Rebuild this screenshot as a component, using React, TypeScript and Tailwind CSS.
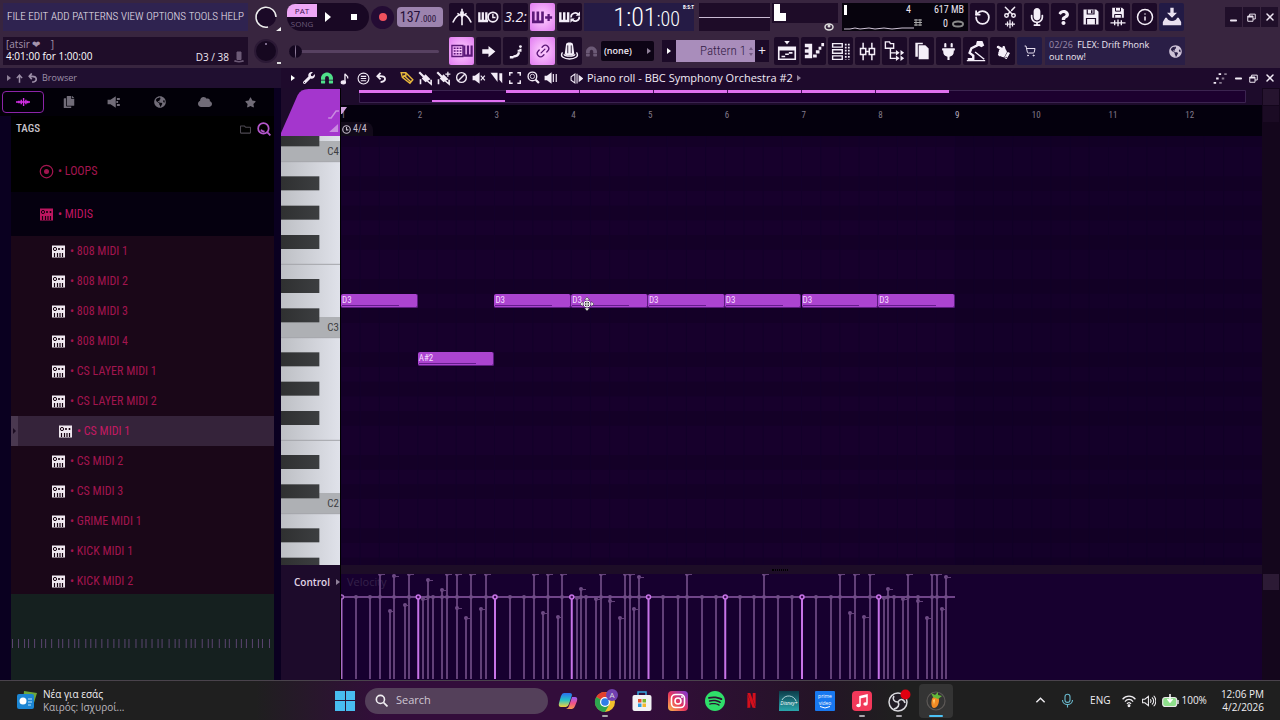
import { useState } from 'react'
import type { ReactNode } from 'react'
import { Info, Link2, Minus, RotateCcw, Scissors, ShoppingCart, X } from 'lucide-react'
import {
  FaCloud, FaCopy, FaGlobeAmericas, FaHandPointLeft, FaMagnet, FaMicrophone,
  FaPlug, FaQuestion, FaRegFolder, FaStar, FaWrench,
} from 'react-icons/fa'
import { SiNetflix, SiSpotify } from 'react-icons/si'

/* ---------- Data ---------- */

const menus = ['FILE', 'EDIT', 'ADD', 'PATTERNS', 'VIEW', 'OPTIONS', 'TOOLS', 'HELP']

const files = [
  '808 MIDI 1', '808 MIDI 2', '808 MIDI 3', '808 MIDI 4', 'CS LAYER MIDI 1', 'CS LAYER MIDI 2',
  'CS MIDI 1', 'CS MIDI 2', 'CS MIDI 3', 'GRIME MIDI 1', 'KICK MIDI 1', 'KICK MIDI 2',
]

// row 0 is C4, each row goes one semitone down
const notes = [
  { name: 'D3', bar: 0, row: 10 },
  { name: 'A#2', bar: 1, row: 14 },
  { name: 'D3', bar: 2, row: 10 },
  { name: 'D3', bar: 3, row: 10 },
  { name: 'D3', bar: 4, row: 10 },
  { name: 'D3', bar: 5, row: 10 },
  { name: 'D3', bar: 6, row: 10 },
  { name: 'D3', bar: 7, row: 10 },
]

const BARS = 12
const ROLL_H = 429
const rowY = (row: number) => 11 + (row * 44) / 3
const rowTop = (row: number) => `${(rowY(row) / ROLL_H) * 100}%`
const rows = Array.from({ length: 30 }, (_, i) => i - 1)
const isBlack = (row: number) => [2, 4, 6, 9, 11].includes((row + 12) % 12)

// [x, top] pairs for the velocity stems, 0 is clipped at the top and 23 is the default level
const stems: [number, number][] = [
  [15, 23], [29, 23], [39, 0], [49, 37], [53, 2], [64, 31], [68, 0],
  [82, 25], [87, 6], [92, 23], [101, 16], [106, 0], [116, 0], [116, 34], [125, 44], [130, 0], [140, 35], [145, 0],
  [169, 23], [183, 23], [193, 0], [202, 39], [207, 0], [217, 43], [221, 0],
  [236, 24], [240, 15], [245, 23], [255, 25], [260, 0], [269, 23], [269, 27], [279, 44], [284, 0], [289, 0], [293, 35], [298, 3],
  [322, 23], [337, 23], [346, 0], [361, 23], [375, 23],
  [399, 23], [413, 23], [423, 0], [437, 23], [451, 23],
  [475, 23], [490, 23], [499, 0], [509, 39], [514, 0], [523, 43], [529, 0],
  [543, 24], [547, 15], [553, 23], [562, 25], [567, 0], [577, 23], [577, 27], [586, 44], [591, 0], [596, 0], [601, 35], [605, 3],
]

const previewTicks = [
  1, 7, 13, 17, 23, 30, 34, 40, 47, 51, 57, 63, 67, 74, 79, 84, 90, 96, 102, 107, 113, 117, 124, 130, 134, 140, 146, 150,
  157, 163, 167, 174, 179, 183, 190, 196, 200, 207, 213, 217, 224, 229, 234, 240, 246, 250, 257,
]

/* ---------- Icons ---------- */

function Svg({ size = 18, children, w = 2 }: { size?: number; children: ReactNode; w?: number }) {
  return (
    <svg width={size} height={size} viewBox="0 0 24 24" fill="none" stroke="currentColor" strokeWidth={w} className="shrink-0">
      {children}
    </svg>
  )
}

function Caret({ bright }: { bright?: boolean }) {
  return <svg width="4" height="6" viewBox="0 0 4 6" className="shrink-0"><path d="M0 0l4 3-4 3z" fill={bright ? '#fff' : '#8f8098'} /></svg>
}

const Metronome = () => (
  <Svg size={22} w={1.8}><path d="M2 18C5 11 8 9 12 9s7 2 10 9M12 3v18" /><path d="M7 8l3 2M17 8l-3 2" /><path d="M10 6h4v5l-2 2-2-2z" fill="currentColor" stroke="none" /></Svg>
)
const WaitInput = () => (
  <Svg size={21}><path d="M1.5 6v10h10M5.500 6v9M9.5 6v9" strokeWidth="2.6" /><circle cx="17" cy="11.5" r="5.5" fill="#1c0a28" /><path d="M17 8v4h3" strokeWidth="1.6" /></Svg>
)
const KeysPlus = () => (
  <Svg size={21}><path d="M1.5 5v12h10.500V5M6.700 5v11" strokeWidth="3" /><path d="M15 12h8M19 8v8" strokeWidth="2.6" /></Svg>
)
const KeysLoop = () => (
  <Svg size={21}><path d="M1.5 6v10h9V6M6 6v10" strokeWidth="2.8" /><path d="M14 12c-1-5 6-7 8-3M23 11c1 5-6 7-8 3" /><path d="M24 5v5h-5zM13 18v-5h5z" fill="currentColor" stroke="none" /></Svg>
)
const TypingKeys = () => (
  <Svg size={22}><path d="M1 6h12v12H1z" strokeWidth="1.4" /><path d="M3 9h9M3 12h9M3 15h9" strokeWidth="1.6" strokeDasharray="2 1.2" /><path d="M14.500 6v11h8V6M18.500 6v10" strokeWidth="2.4" /></Svg>
)
const StepArrow = () => (
  <Svg size={15}><path d="M2 8.500h10V3l11 9-11 9v-5.500H2z" fill="currentColor" stroke="none" /></Svg>
)
const Slide = () => (
  <Svg size={17}><path d="M4 20h5M9 19c5 0 7-2 8-6" strokeWidth="3.5" /><path d="M15 11h4V8" strokeWidth="3" /><circle cx="19" cy="5" r="2" fill="currentColor" stroke="none" /></Svg>
)
const Knob = () => (
  <Svg size={21}><path d="M8 4c0-3 8-3 8 0l1.5 11c-2 2-9 2-11 0z" fill="currentColor" stroke="none" /><path d="M4 13c-7 10 23 10 16 0" strokeWidth="1.6" /><path d="M6 15c-1 3 13 3 12 0" strokeWidth="1.4" /><path d="M10 5v9M14 5v9" stroke="#1c0a28" strokeWidth="1" /></Svg>
)
const SaveWave = () => (
  <Svg size={20}><path d="M5 1h12l2 2v10H5z" fill="currentColor" stroke="none" /><path d="M9 1v4h6V1M8 13V9h8v4" stroke="#1c0a28" strokeWidth="1.2" /><path d="M3 19h18M8 16v6M12 15v8M16 16v6" strokeWidth="1.6" /></Svg>
)
const CutWave = () => (
  <span className="flex flex-col items-center">
    <Scissors size={14} strokeWidth={2.5} className="-rotate-90" />
    <Svg size={10} w={3}><path d="M0 12h24M6 6v12M12 2v20M18 6v12" /></Svg>
  </span>
)
const Floppy = () => (
  <Svg size={18}><path d="M2 2h17l3 3v17H2z" fill="currentColor" stroke="none" /><path d="M7 2v6h9V2M6 22v-8h12v8" stroke="#1c0a28" strokeWidth="1.6" /><path d="M13 3v4" stroke="#1c0a28" /></Svg>
)
const Tray = () => (
  <Svg size={20}><path d="M10 1h4v6h4l-6 6-6-6h4z" fill="currentColor" stroke="none" /><path d="M6 13H4l-3 5v4h22v-4l-3-5h-2c0 5-12 5-12 0z" fill="currentColor" stroke="none" /></Svg>
)
const PlaylistIcon = () => (
  <Svg size={22} w={1.8}><path d="M3 8h18v13H3z" /><path d="M3 10h18" strokeWidth="3" /><path d="M9 1h6l-3 4z" fill="currentColor" stroke="none" /><path d="M6 18h4M10 15.500h4M14 14h4" /></Svg>
)
const RollIcon = () => (
  <Svg size={22}><path d="M2 4h8v16H2z" fill="currentColor" stroke="none" /><path d="M1 9h5M1 15h5" stroke="#1c0a28" strokeWidth="2.2" /><path d="M11 17.500h4M14 13h4M17 9h3M20 5h3" strokeWidth="3.4" /></Svg>
)
const RackIcon = () => (
  <Svg size={21} w={1.6}><path d="M3 3h11v4H3zM3 10h11v4H3zM3 17h11v4H3z" /><path d="M18 3v18M21.500 3v18" strokeDasharray="2 1.5" strokeWidth="2" /></Svg>
)
const MixerIcon = () => (
  <Svg size={21} w={1.7}><path d="M7 2v6M7 16v6M17 2v6M17 16v6M4 8.500h6v7H4zM14 8.500h6v7h-6zM10 12h4" /></Svg>
)
const TreeIcon = () => (
  <Svg size={22} w={1.5}><path d="M1.5 2v7h9V4H7L6 2zM7 9v11h6M7 14h6" /><path d="M13 11l4 3-4 3zM18 11l4 3-4 3zM13 17l4 3-4 3zM18 17l4 3-4 3z" fill="currentColor" stroke="none" /></Svg>
)
const PageIcon = () => (
  <Svg size={20}><path d="M4 2h9v2H7v15H4z" fill="currentColor" stroke="none" /><path d="M8 5h8l4 4v13H8z" fill="currentColor" stroke="none" /></Svg>
)
const HammerMan = () => (
  <Svg size={22}><path d="M13 1l6 0 2 5-3 2-6-3z" fill="currentColor" stroke="none" /><path d="M15 5L7 9l-2 5 4 3v4H3" strokeWidth="2.6" /><path d="M11 13l10 8M2 22.500h20" strokeWidth="1.5" /></Svg>
)
const MidiFile = ({ size = 13 }: { size?: number }) => (
  <svg width={size} height={size} viewBox="0 0 13 12" className="shrink-0">
    <rect width="13" height="12" fill="currentColor" />
    <circle cx="3" cy="3.500" r="1.6" fill="none" stroke="#150010" />
    <path d="M6 3.500h2M9.500 3.500h2M7 2.500v2M10.500 2.500v2M2.500 7.500v4M5.500 7.500v4M8 7.500v4M10.500 7.500v4" stroke="#150010" strokeWidth="1.2" />
  </svg>
)
const Wave = () => (
  <Svg size={14} w={2.4}><path d="M0 12h24M5 10v4M9 8v8M13 5v14M17 8v8M20 10v4" /></Svg>
)
const SpeakerPlug = () => (
  <Svg size={14}><path d="M1 8h5l9-6v20l-9-6H1z" fill="currentColor" stroke="none" /><path d="M17 7h5M17 17h5M16 12h3" strokeWidth="3.5" /></Svg>
)
const Brush = ({ plus }: { plus?: boolean }) => (
  <Svg size={15}><path d="M2 2l8 8" strokeWidth="3.5" /><path d="M12 5l8 8-8 5-6-6z" fill="currentColor" stroke="none" /><path d="M4 13v8M15 16l6 5v-7" strokeWidth="2.6" />{plus && <path d="M15 5h8M19 1v8" />}</Svg>
)
const Restore = ({ size = 10 }: { size?: number }) => (
  <Svg size={size} w={2.6}><path d="M2 8h14v14H2zM7 8V3h15v13h-6" /><path d="M2 10h14" strokeWidth="4" /></Svg>
)

const playTools: [string, ReactNode, boolean][] = [
  ['Metronome', <Metronome />, false],
  ['Wait for input', <WaitInput />, false],
  ['Countdown', <span className="text-sm italic leading-none">3.2:</span>, false],
  ['Overdub', <KeysPlus />, true],
  ['Loop record', <KeysLoop />, false],
]
const editTools: [string, ReactNode, boolean][] = [
  ['Typing keyboard', <TypingKeys />, true],
  ['Step edit', <StepArrow />, false],
  ['Slide', <Slide />, false],
  ['Multilink', <Link2 size={16} className="-rotate-45" />, true],
  ['Knob', <Knob />, false],
]
const fileTools: [string, ReactNode][] = [
  ['Undo', <RotateCcw size={17} strokeWidth={2.5} />],
  ['Cut', <CutWave />],
  ['Record audio', <FaMicrophone size={18} />],
  ['Help', <FaQuestion size={15} />],
  ['Save', <Floppy />],
  ['Render', <SaveWave />],
  ['About', <Info size={18} />],
]
const viewTools: [string, ReactNode][] = [
  ['Playlist', <PlaylistIcon />],
  ['Piano roll', <RollIcon />],
  ['Channel rack', <RackIcon />],
  ['Mixer', <MixerIcon />],
  ['Browser', <TreeIcon />],
  ['Projects', <PageIcon />],
  ['Plugins', <FaPlug size={17} />],
  ['Tempo tapper', <HammerMan />],
  ['Touch', <FaHandPointLeft size={15} className="rotate-30" />],
]

function ToolButton({ label, on, blue, children }: { label: string; on?: boolean; blue?: boolean; children: ReactNode }) {
  const tone = on
    ? 'bg-[radial-gradient(#ffd0ff,#e07af0)] text-[#5b1878]'
    : blue ? 'bg-[#221a45] text-[#e8e0f0]' : 'bg-[#1c0a28] text-[#f4eef8]'
  return (
    <button aria-label={label} className={`flex h-7 w-[25px] shrink-0 items-center justify-center overflow-hidden rounded-xs ${tone}`}>
      {children}
    </button>
  )
}

/* ---------- Top bar ---------- */

function TopBar() {
  return (
    <header className="flex h-[68px] shrink-0 bg-[#38253f] py-[3px] pl-[3px] text-[#eee6f2]">
      <div className="flex w-[245px] shrink-0 flex-col gap-1.5">
        <nav className="flex h-7 items-center justify-between bg-[#2f2350] px-1 font-['Roboto_Condensed',Roboto,sans-serif] text-[11px] font-light">
          {menus.map(m => <button key={m}>{m}</button>)}
        </nav>
        <div className="flex h-7 justify-between bg-[#1f0d29] px-[3px] text-[10px] leading-3">
          <div className="pt-px">
            <div className="text-[#a493ac]">[atsir ❤&nbsp;&nbsp;&nbsp;&nbsp;]</div>
            <div className="text-white">4:01:00 for 1:00:00</div>
          </div>
          <div className="flex items-end gap-1 pb-0.5">
            <span>D3 / 38</span>
            <span className="text-[#6c5a76]"><Svg size={12}><path d="M8 2h8v15H8z" fill="currentColor" /><path d="M3 19c2 3 16 3 18 0" strokeWidth="3" /></Svg></span>
          </div>
        </div>
      </div>

      <div className="flex w-9 shrink-0 flex-col items-center gap-1.5 pl-0.5">
        <svg width="30" height="28" viewBox="0 0 30 28">
          <circle cx="14" cy="14" r="10" fill="#1b0927" />
          <path d="M16 24A10 10 0 1 1 24 14" fill="none" stroke="#eee" strokeWidth="1.5" />
          <path d="M29 24v4h-5z" fill="#eee" />
        </svg>
        <svg width="30" height="28" viewBox="0 0 30 28">
          <circle cx="14" cy="14" r="11" fill="#160820" stroke="#2b1935" strokeWidth="2" />
          <circle cx="14" cy="7" r="1" fill="#a08cb0" />
          <path d="M25 26h4" stroke="#ddd" strokeWidth="2" />
        </svg>
      </div>

      <div className="flex w-[165px] shrink-0 flex-col gap-1.5 pl-[3px]">
        <div className="flex h-7 items-center gap-0.5">
          <div className="flex h-7 w-[82px] items-center rounded-2xl bg-[#190824]">
            <div className="w-[30px] text-center text-[8px] leading-[13px]">
              <button className="block w-full rounded-tl-lg bg-[#eda6f5] text-[#3a1450]">PAT</button>
              <button className="block w-full text-[#6d5a7b]">SONG</button>
            </div>
            <button aria-label="Play" className="ml-2"><svg width="6" height="10" viewBox="0 0 6 10"><path d="M0 0l6 5-6 5z" fill="#fff" /></svg></button>
            <button aria-label="Stop" className="ml-5 size-1.5 bg-white" />
          </div>
          <button aria-label="Record" className="flex size-[23px] items-center justify-center rounded-full bg-[#240c34]">
            <span className="size-2 rounded-full bg-[#f0525e]" />
          </button>
          <div className="ml-px flex h-5 w-[46px] items-baseline justify-center rounded-sm bg-[#9c83ae] pr-1 font-['Roboto_Condensed',Roboto,sans-serif] text-[#261038]">
            <span className="text-sm leading-5">137</span><span className="text-[9px]">.000</span>
          </div>
        </div>
        <div className="flex h-7 items-center">
          <input
            type="range"
            aria-label="Pitch"
            defaultValue={0}
            className="ml-0.5 h-[3px] w-[150px] appearance-none rounded bg-[#574161] [&::-webkit-slider-thumb]:size-[13px] [&::-webkit-slider-thumb]:appearance-none [&::-webkit-slider-thumb]:rounded-full [&::-webkit-slider-thumb]:border-x-[6px] [&::-webkit-slider-thumb]:border-[#150720] [&::-webkit-slider-thumb]:bg-[#8d7a98]"
          />
        </div>
      </div>

      <div className="flex min-w-0 grow flex-col gap-1.5">
        <div className="flex h-7 gap-0.5">
          {playTools.map(([label, icon, on]) => <ToolButton key={label} label={label} on={on}>{icon}</ToolButton>)}
          <div className="relative flex w-[110px] shrink-0 items-baseline justify-end bg-[#251b45] pr-3.5 font-['Roboto_Condensed',Roboto,sans-serif] font-light text-white">
            <span className="text-[26px] leading-7">1:01</span><span className="text-xl leading-7">:00</span>
            <span className="absolute top-0 right-0 text-[5px] leading-2 font-bold">B:S:T</span>
          </div>
          <div className="ml-[3px] flex w-[71px] shrink-0 items-center bg-[#1e0c28]"><div className="h-px w-full bg-[#c9bad2]" /></div>
          <div className="relative w-[66px] shrink-0">
            <div className="h-5 bg-[#1e0c28] pt-px">
              <div className="ml-0.5 h-[9px] w-1.5 bg-white" />
              <div className="ml-0.5 h-2 w-3 bg-white" />
            </div>
            <svg width="10" height="8" viewBox="0 0 10 8" className="absolute right-1 bottom-0"><ellipse cx="5" cy="4" rx="4" ry="3" fill="none" stroke="#ddd" strokeWidth="1.5" /><circle cx="5" cy="3" r="1.5" fill="#ddd" /></svg>
          </div>
          <div className="ml-0.5 flex w-[126px] shrink-0 flex-col justify-between bg-[#07030d] pr-1 pl-0.5 font-['Roboto_Condensed',Roboto,sans-serif] text-[10px] leading-[14px]">
            <div className="flex items-center">
              <span className="h-2.5 w-[3px] bg-white" />
              <span className="ml-auto">4</span>
              <span className="w-[53px] text-right">617 MB</span>
            </div>
            <div className="flex items-center">
              <svg width="70" height="6" viewBox="0 0 70 6" className="mt-2"><path d="M0 4h6l5-1 5 1 9-1 6 1 9-1 8 1 10-1 12 0" stroke="#cfc4d6" fill="none" /></svg>
              <svg width="8" height="7" viewBox="0 0 8 7" className="mb-1"><path d="M0 1h8M0 3.500h8M0 6h8M2 0v7M6 0v7" stroke="#aaa" /></svg>
              <span className="ml-auto">0</span>
              <svg width="12" height="8" viewBox="0 0 12 8" className="ml-1"><ellipse cx="6" cy="4" rx="5" ry="2.500" fill="none" stroke="#888" strokeWidth="2" /></svg>
            </div>
          </div>
          <div className="flex gap-0.5">
            {fileTools.map(([label, icon]) => <ToolButton key={label} label={label}>{icon}</ToolButton>)}
            <ToolButton label="Downloads" blue><Tray /></ToolButton>
          </div>
          <div className="mt-1 mr-0.5 ml-auto flex h-5 gap-px [&>button]:flex [&>button]:w-[17px] [&>button]:items-center [&>button]:justify-center [&>button]:bg-[#200f2a]">
            <button aria-label="Minimise"><Minus size={9} strokeWidth={5} className="mt-1.5" /></button>
            <button aria-label="Restore"><Restore size={9} /></button>
            <button aria-label="Close"><X size={12} strokeWidth={3} /></button>
          </div>
        </div>

        <div className="flex h-7 items-center gap-0.5">
          {editTools.map(([label, icon, on]) => <ToolButton key={label} label={label} on={on}>{icon}</ToolButton>)}
          <FaMagnet size={11} className="mx-0.5 shrink-0 rotate-180 text-[#6c5a76]" />
          <div className="flex h-5 w-[53px] shrink-0 items-center justify-between rounded-xs bg-[#0d0415] px-[3px] text-[9px] font-semibold">
            <select aria-label="Snap" className="appearance-none"><option>(none)</option></select>
            <Caret />
          </div>
          <div className="ml-1.5 flex h-[22px] shrink-0">
            <button aria-label="Previous pattern" className="flex w-3.5 items-center justify-center bg-[#1c0a28]"><Caret bright /></button>
            <div className="flex w-[79px] items-center justify-end gap-0.5 bg-[#a98dbb] pr-0.5 font-['Roboto_Condensed',Roboto,sans-serif] text-[13px] font-light text-[#321a45]">
              <select aria-label="Pattern" className="appearance-none"><option>Pattern 1</option></select>
              <svg width="4" height="9" viewBox="0 0 4 9"><path d="M0 3l2-3 2 3zM0 6l2 3 2-3z" fill="#755c86" /></svg>
            </div>
            <button aria-label="Add pattern" className="w-3.5 bg-[#1c0a28] text-sm leading-5">+</button>
          </div>
          <div className="ml-[3px] flex gap-0.5">
            {viewTools.map(([label, icon]) => <ToolButton key={label} label={label}>{icon}</ToolButton>)}
            <ToolButton label="Shop" blue><ShoppingCart size={12} /></ToolButton>
          </div>
          <div className="ml-px flex h-7 w-[140px] shrink-0 items-center justify-between bg-[#2a1e46] pr-[3px] pl-1 text-[9px] leading-3">
            <p><span className="mr-0.5 text-[#9b8bab]">02/26</span> FLEX: Drift Phonk<br />out now!</p>
            <FaGlobeAmericas size={13} className="shrink-0 text-[#cfc3d8]" />
          </div>
        </div>
      </div>
    </header>
  )
}

/* ---------- Browser ---------- */

const tabs: [string, ReactNode][] = [
  ['Sounds', <Wave />],
  ['Files', <FaCopy size={12} />],
  ['Plugins', <SpeakerPlug />],
  ['Online', <FaGlobeAmericas size={12} />],
  ['Cloud', <FaCloud size={14} />],
  ['Starred', <FaStar size={11} />],
]

function Browser() {
  const [tab, setTab] = useState('Sounds')
  const [selected, setSelected] = useState('CS MIDI 1')

  return (
    <aside className="flex w-[281px] shrink-0 flex-col bg-[#0a0020]">
      <div className="flex h-5 shrink-0 items-center gap-1 bg-[#200f30] px-[7px] text-[9px] text-[#9d8fa8]">
        <Caret />
        <Svg size={9} w={4}><path d="M12 23V4M5 11l7-8 7 8" /></Svg>
        <Svg size={10} w={4}><path d="M10 22c14-2 12-14 0-14H4M9 1L3 8l6 7" /></Svg>
        <span>Browser</span>
      </div>
      <div className="mr-[7px] flex h-7 shrink-0 items-center justify-between bg-[#020008] pr-0.5 pl-0.5">
        {tabs.map(([name, icon]) => (
          <button
            key={name}
            aria-label={name}
            onClick={() => setTab(name)}
            className={`flex h-[22px] w-[42px] items-center justify-center rounded-sm border ${tab === name ? 'border-[#8c24a8] text-[#d62fe8]' : 'border-transparent text-[#716c78]'}`}
          >
            {icon}
          </button>
        ))}
      </div>
      <div className="mr-[7px] ml-[11px] flex h-[26px] shrink-0 items-center bg-black pr-[3px] pl-[5px] font-['Roboto_Condensed',Roboto,sans-serif] text-[11px] font-medium text-[#c9c4cc]">
        TAGS
        <FaRegFolder size={11} className="ml-auto text-[#4d4852]" />
        <button aria-label="Search" className="ml-1.5 text-[#b456cc]">
          <Svg size={14} w={3}><circle cx="11" cy="11" r="9" /><path d="M17 17l6 6M7 13a5 5 0 0 0 6 3" /></Svg>
        </button>
      </div>

      <div className="mr-[7px] ml-[11px] flex min-h-0 grow flex-col overflow-hidden bg-[#1a0718] font-['Roboto_Condensed',Roboto,sans-serif] text-xs text-[#a3154f]">
        <button className="flex h-[50px] shrink-0 items-center gap-1 bg-black pt-2 pl-7">
          <Svg size={15}><circle cx="12" cy="12" r="10" /><circle cx="12" cy="12" r="3" fill="currentColor" /></Svg>
          <span>• LOOPS</span>
        </button>
        <button className="flex h-11 shrink-0 items-center gap-[5px] bg-[#05000f] pl-[29px] text-[#bd1660]">
          <MidiFile />
          <span>• MIDIS</span>
        </button>
        <ul>
          {files.map(f => (
            <li key={f}>
              <button
                onClick={() => setSelected(f)}
                className={`relative flex h-[30px] w-full items-center gap-[5px] ${selected === f ? 'bg-[#35233a] pl-12 text-[#c21a62]' : 'pl-[41px]'}`}
              >
                {selected === f && (
                  <span className="absolute inset-y-0 left-0 flex w-[7px] items-center justify-center bg-[#4a3850]">
                    <svg width="3" height="6" viewBox="0 0 3 6"><path d="M0 0l3 3-3 3z" fill="#1c0c22" /></svg>
                  </span>
                )}
                <span className="text-[#eee6ee]"><MidiFile /></span>
                <span>• {f}</span>
              </button>
            </li>
          ))}
        </ul>
      </div>

      <div className="mr-[7px] ml-[11px] h-[86px] shrink-0 bg-[#15201f]">
        <svg width="100%" height="100%" viewBox="0 0 262 86" preserveAspectRatio="none">
          {previewTicks.map(x => <path key={x} d={`M${x + 0.5} 45v9`} stroke="#5b4570" />)}
        </svg>
      </div>
    </aside>
  )
}

/* ---------- Piano roll ---------- */

function Keyboard() {
  return (
    <div className="relative min-h-0 grow bg-[#cfd0d8]">
      <svg width="100%" height="100%" viewBox={`0 0 60 ${ROLL_H}`} preserveAspectRatio="none" className="absolute inset-0">
        <defs>
          <linearGradient id="white"><stop offset="0" stopColor="#bdbfc4" /><stop offset="1" stopColor="#e0e2ea" /></linearGradient>
          <linearGradient id="black"><stop offset="0" stopColor="#2f3031" /><stop offset="1" stopColor="#3c3e40" /></linearGradient>
        </defs>
        <rect width="60" height={ROLL_H} fill="url(#white)" />
        {[0, 12, 24].map(r => <rect key={r} y={rowY(r) - 6} width="60" height="20.500" fill="#aeb0b4" />)}
        {[0, 7, 12, 19, 24].map(r => <path key={r} d={`M0 ${rowY(r + 1)}h60`} stroke="#a2a4a8" />)}
        {rows.filter(isBlack).map(r => <rect key={r} y={rowY(r)} width="39" height="14" fill="url(#black)" />)}
      </svg>
      {['C4', 'C3', 'C2'].map((c, i) => (
        <span
          key={c}
          style={{ top: rowTop(i * 12) }}
          className="absolute right-px -mt-[3px] font-['Roboto_Condensed',Roboto,sans-serif] text-[11px] leading-4 text-[#3d3d42]"
        >
          {c}
        </span>
      ))}
    </div>
  )
}

function Roll() {
  return (
    <div className="relative min-h-0 grow overflow-hidden bg-[#17002c]">
      <svg width="100%" height="100%" viewBox={`0 0 921 ${ROLL_H}`} preserveAspectRatio="none" className="absolute inset-0">
        {rows.filter(isBlack).map(r => <rect key={r} y={rowY(r)} width="921" height="14.667" fill="#140027" />)}
        {Array.from({ length: 48 }, (_, i) => <path key={i} d={`M${(i * 921) / 48} 0v429`} stroke="#13002a" />)}
        <rect x="614" width="307" height={ROLL_H} fill="#0a0018" opacity="0.15" />
      </svg>
      {notes.map(n => (
        <div
          key={n.bar}
          style={{ left: `${(n.bar / BARS) * 100}%`, width: `${100 / BARS}%`, top: rowTop(n.row) }}
          className="absolute h-3.5 rounded-xs border-r border-b border-[#5c1c80] bg-[#ab44d0] pl-px font-['Roboto_Condensed',Roboto,sans-serif] text-[9px] leading-3 text-[#f6dcff]"
        >
          {n.name}
          <div className="absolute bottom-px left-px h-px w-3/4 bg-[#641d8c]" />
        </div>
      ))}
      <svg width="14" height="14" viewBox="0 0 14 14" style={{ left: '26%', top: '37.5%' }} className="absolute">
        <path d="M7 0l2.500 3h-5zM7 14l2.500-3h-5zM0 7l3-2.500v5zM14 7l-3-2.500v5z" fill="#fff" stroke="#222" strokeWidth=".5" />
        <circle cx="7" cy="7" r="3" fill="#333" stroke="#fff" />
        <path d="M7 4v6M4 7h6" stroke="#fff" />
      </svg>
    </div>
  )
}

function Velocity() {
  return (
    <div className="relative h-[106px] shrink-0 bg-[#17002f]">
      <span className="absolute top-0.5 left-1.5 text-[11px] leading-3 text-[#35204a]">Velocity</span>
      <svg width="100%" height="100%" viewBox="0 0 921 106" preserveAspectRatio="none" className="absolute inset-0">
        <path d="M0 23h614" stroke="#6f4488" strokeWidth="2" />
        {stems.map(([x, top], i) => (
          <g key={i} stroke="#624078" fill="#6f4c86">
            <path d={`M${x} ${top}V105`} strokeWidth="2" />
            <circle cx={x} cy={top} r="2" stroke="none" />
            {top < 23 && <circle cx={x} cy="23" r="2" stroke="none" />}
            {top !== 23 && <path d={`M${x} ${top + 0.5}h5`} />}
          </g>
        ))}
        {notes.map(n => {
          const x = (n.bar * 921) / BARS + 0.5
          return (
            <g key={n.bar} stroke={n.bar === 0 ? '#a86cc4' : '#c874e8'} strokeWidth="1.5">
              <path d={`M${x} 25V105`} strokeWidth="2" />
              <circle cx={x} cy="23" r="2" fill="#3a0c50" />
            </g>
          )
        })}
      </svg>
    </div>
  )
}

const rollTools: [string, ReactNode][] = [
  ['Stamp', <FaWrench size={12} />],
  ['Snap', <FaMagnet size={12} className="rotate-180 text-[#4fe08a]" />],
  ['Note', <Svg size={13}><path d="M11 3v15M11 3c1 4 7 4 5 9" strokeWidth="2.5" /><ellipse cx="8" cy="19" rx="4" ry="3" fill="currentColor" /></Svg>],
  ['Menu', <Svg size={13}><circle cx="12" cy="12" r="10" /><path d="M7 8h10M7 12h10M7 16h10" /></Svg>],
  ['Undo', <Svg size={11} w={4}><path d="M10 22c14-2 12-13 0-13H4M10 2L3 9l7 7" /></Svg>],
]
const drawTools: [string, ReactNode][] = [
  ['Draw', <span className="text-[#e8b83c]"><Svg size={14} w={2.4}><path d="M2 3h8l12 12-5 6L4 11zM6 7l12 11M10 4v4l-5 2" /></Svg></span>],
  ['Paint', <Brush />],
  ['Paint drums', <Brush plus />],
  ['Delete', <Svg size={13} w={2.5}><circle cx="12" cy="12" r="9" /><path d="M6 18L18 6" /></Svg>],
  ['Mute', <Svg size={14}><path d="M1 8h4l8-6v20l-8-6H1z" fill="currentColor" stroke="none" /><path d="M15 8l7 8M22 8l-7 8" /></Svg>],
  ['Slice', <Svg size={14}><path d="M1 3h12v16z" fill="currentColor" stroke="none" /><path d="M16 4h5v17l-5-6z" fill="currentColor" stroke="none" /></Svg>],
  ['Select', <Svg size={14} w={2.5}><path d="M3 8V3h5M16 3h5v5M21 16v5h-5M8 21H3v-5" /></Svg>],
  ['Zoom', <Svg size={13} w={2.5}><circle cx="10" cy="10" r="8" /><path d="M16 16l6 6" strokeWidth="4" /><circle cx="10" cy="10" r="4" strokeWidth="1.5" /></Svg>],
  ['Playback', <Svg size={14}><path d="M1 8h4l8-6v20l-8-6H1z" fill="currentColor" stroke="none" /><path d="M16 5v14M21 5v14" /></Svg>],
]

function PianoRoll() {
  return (
    <main className="flex min-w-0 grow flex-col bg-[#1d0b2b]">
      <div className="flex h-5 shrink-0 items-center bg-[#1e0a2c] pl-2.5 text-[#f2ebf6]">
        <Caret bright />
        <div className="ml-[5px] flex [&>button]:flex [&>button]:w-[18px] [&>button]:justify-center">
          {rollTools.map(([label, icon]) => <button key={label} aria-label={label}>{icon}</button>)}
        </div>
        <div className="ml-2 flex [&>button]:flex [&>button]:w-[18px] [&>button]:justify-center">
          {drawTools.map(([label, icon]) => <button key={label} aria-label={label}>{icon}</button>)}
        </div>
        <span className="mr-1 ml-2.5"><Svg size={13}><path d="M9 4v16l-7-5V9z" /><path d="M13 3v18M17 7l6 5-6 5z" fill="currentColor" /></Svg></span>
        <h1 className="mr-1 truncate text-[11px]">Piano roll - BBC Symphony Orchestra #2</h1>
        <Caret />
        <div className="mr-1 ml-auto flex items-center gap-1.5">
          <Svg size={15} w={3}><path d="M1 19h4M5 12h4M9 5h4" /><path d="M10 19h4M14 12h4M18 5h4" opacity=".5" /></Svg>
          <button aria-label="Minimise roll"><Minus size={9} strokeWidth={5} /></button>
          <button aria-label="Restore roll"><Restore size={9} /></button>
          <button aria-label="Close roll"><X size={12} strokeWidth={3} /></button>
        </div>
      </div>

      <div className="flex min-h-0 grow">
        <div className="flex w-[60px] shrink-0 flex-col border-r border-black">
          <svg width="100%" height="48" viewBox="0 0 60 48" preserveAspectRatio="none" className="shrink-0">
            <path d="M0 48V45L17 7Q20 1 28 1H60V48z" fill="#a436cd" />
            <path d="M48 30h3l5-7h3" stroke="#c98be0" strokeWidth="1.5" fill="none" />
            <path d="M58 36v8h-9z" fill="#c98be0" />
          </svg>
          <Keyboard />
          <div className="flex h-[115px] shrink-0 justify-end pt-[9px]">
            <button className="flex h-4 items-center gap-1.5 text-[10px] font-semibold text-[#e0d6e6]">Control <Caret /></button>
          </div>
        </div>

        <div className="flex min-w-0 grow flex-col">
          <div className="mr-4 ml-[18px] h-[17px] shrink-0 py-0.5">
            <svg width="100%" height="100%" viewBox="0 0 887 13" preserveAspectRatio="none" className="bg-[#1c002f]">
              <path d="M.5 .5h886v12H.5z" fill="none" stroke="#3b2350" />
              <path d="M0 1.500h73M147 1.500h443" stroke="#e070f0" strokeWidth="3" />
              <path d="M73 11h73" stroke="#e070f0" strokeWidth="2" />
              <path d="M220.500 0v3M294.500 0v3M368.500 0v3M442.500 0v3M516.500 0v3" stroke="#4a1460" />
            </svg>
          </div>
          <div className="flex h-[31px] shrink-0 flex-col bg-[#04000d] font-['Roboto_Condensed',Roboto,sans-serif] text-[9px] leading-[14px] text-[#827a8a]">
            <div className="relative flex h-[17px] items-center pt-[3px]">
              {Array.from({ length: BARS }, (_, i) => (
                <span key={i} className={`min-w-0 flex-1 ${i === 8 ? 'text-[#b8b0c0]' : ''}`}>{i + 1}</span>
              ))}
              <svg width="6" height="7" viewBox="0 0 6 7" className="absolute top-0.5 left-0"><path d="M0 0h6l-5 7H0z" fill="#cfa0dc" /></svg>
            </div>
            <div className="flex h-3.5 w-8 items-center gap-0.5 rounded-tr-lg bg-[#120a1a] pl-px text-[10px] text-[#c6bdcc]">
              <Svg size={9}><circle cx="12" cy="12" r="10" strokeWidth="3" /><path d="M12 5v8h5" strokeWidth="3" /></Svg>4/4
            </div>
          </div>
          <Roll />
          <div className="flex h-[9px] shrink-0 items-center justify-center bg-[#1d0d27] pr-11"><span className="h-0.5 w-4 border-y border-dotted border-black" /></div>
          <Velocity />
        </div>

        <div className="flex w-[18px] shrink-0 flex-col bg-[#14061c]">
          <div className="m-px h-4 bg-[#26142f]" />
          <div className="mx-px h-4 bg-[#1b0b24]" />
          <div className="mx-px mt-auto mb-[90px] h-4 bg-[#2c1a35]" />
        </div>
      </div>
    </main>
  )
}

/* ---------- Taskbar ---------- */

const apps: [string, ReactNode, boolean][] = [
  ['Copilot', (
    <svg width="20" height="20" viewBox="0 0 20 20">
      <defs>
        <linearGradient id="cpA" x2="0" y2="1"><stop stopColor="#2a6ff0" /><stop offset=".5" stopColor="#25c2c8" /><stop offset="1" stopColor="#f4d03c" /></linearGradient>
        <linearGradient id="cpB" x2="0" y2="1"><stop stopColor="#9460f8" /><stop offset=".5" stopColor="#f0508c" /><stop offset="1" stopColor="#f79a4c" /></linearGradient>
      </defs>
      <path d="M6 2h6q2 0 2 2l-3 9q-1 3-3 3H3q-3 0-2-4l2-7q1-3 3-3z" fill="url(#cpA)" />
      <path d="M14 6h3q3 0 2 4l-2 5q-1 3-3 3H8q2 0 3-3z" fill="url(#cpB)" />
    </svg>
  ), false],
  ['Chrome', (
    <svg width="25" height="24" viewBox="0 0 25 24">
      <circle cx="12" cy="13" r="10" fill="#f3c02c" />
      <path d="M12 13L3.300 8A10 10 0 0 1 21 9z" fill="#e2402f" />
      <path d="M12 13L3.300 8A10 10 0 0 0 12 23l4-7z" fill="#2da44f" />
      <circle cx="12" cy="13" r="5" fill="#fff" /><circle cx="12" cy="13" r="3.800" fill="#2f7de8" />
      <circle cx="19" cy="6" r="6" fill="#7040b0" />
      <text x="19" y="9" fontSize="8" textAnchor="middle" fill="#ddd">A</text>
    </svg>
  ), true],
  ['Store', (
    <svg width="20" height="20" viewBox="0 0 20 20">
      <path d="M6 5V1h8v4" fill="none" stroke="#35a8e0" strokeWidth="1.5" />
      <rect x=".5" y="4" width="19" height="16" rx="2" fill="#f2f2f4" />
      <path d="M6 8h3.500v3.500H6z" fill="#e8502c" /><path d="M10.500 8H14v3.500h-3.500z" fill="#7cb82c" /><path d="M6 12.500h3.500V16H6z" fill="#2c9ce0" /><path d="M10.500 12.500H14V16h-3.500z" fill="#f4b82c" />
    </svg>
  ), false],
  ['Instagram', (
    <svg width="20" height="20" viewBox="0 0 20 20">
      <defs><linearGradient id="ig" x1="0" y1="1" x2="1" y2="0"><stop stopColor="#fdc04c" /><stop offset=".45" stopColor="#e8385c" /><stop offset="1" stopColor="#7c38d8" /></linearGradient></defs>
      <rect width="20" height="20" rx="4" fill="url(#ig)" />
      <rect x="3.500" y="3.500" width="13" height="13" rx="4" fill="none" stroke="#fff" strokeWidth="1.6" /><circle cx="10" cy="10" r="3" fill="none" stroke="#fff" strokeWidth="1.6" /><circle cx="14" cy="6" r="1" fill="#fff" />
    </svg>
  ), false],
  ['Spotify', <SiSpotify size={20} color="#2fdd6a" />, false],
  ['Netflix', <SiNetflix size={15} color="#d40f1c" />, false],
  ['Disney+', (
    <svg width="20" height="20" viewBox="0 0 20 20">
      <defs><linearGradient id="dp" x2="0" y2="1"><stop stopColor="#0c3c4a" /><stop offset="1" stopColor="#2aa6ac" /></linearGradient></defs>
      <rect width="20" height="20" fill="url(#dp)" /><path d="M3 9c3-6 12-5 14 1" fill="none" stroke="#d6f0f2" strokeWidth=".8" />
      <text x="10" y="14" fontSize="5" textAnchor="middle" fill="#fff" fontStyle="italic">Disney+</text>
    </svg>
  ), false],
  ['Prime Video', (
    <svg width="20" height="20" viewBox="0 0 20 20">
      <rect width="20" height="20" rx="1" fill="#1878f0" />
      <text x="10" y="7" fontSize="5" textAnchor="middle" fill="#fff">prime</text>
      <text x="10" y="14" fontSize="5" textAnchor="middle" fill="#fff">video</text>
      <path d="M5 15.500q5 3 10 0" fill="none" stroke="#fff" />
    </svg>
  ), false],
  ['Music', (
    <svg width="20" height="20" viewBox="0 0 20 20">
      <rect width="20" height="20" rx="4" fill="#f2385a" />
      <path d="M8 14V5.500l7-1.500v8.500" fill="none" stroke="#fff" strokeWidth="1.5" /><path d="M8 5.500l7-1.500v2l-7 1.500z" fill="#fff" /><ellipse cx="6.500" cy="14.500" rx="2.200" ry="1.800" fill="#fff" /><ellipse cx="13.500" cy="13" rx="2.200" ry="1.800" fill="#fff" />
    </svg>
  ), true],
  ['OBS', (
    <svg width="25" height="24" viewBox="0 0 25 24">
      <circle cx="12" cy="13" r="9" fill="#201c24" stroke="#d8d8dc" strokeWidth="1.5" />
      <path d="M12 13c-4 0-6-3-4-6M12 13c2-4 6-3 7 1M12 13c2 3 0 6-4 7" fill="none" stroke="#d8d8dc" strokeWidth="1.6" />
      <circle cx="19.500" cy="5.500" r="5" fill="#e00010" />
    </svg>
  ), true],
]

function Taskbar() {
  return (
    <footer className="flex h-10 shrink-0 items-center border-t border-[#4a434c] bg-[linear-gradient(90deg,#1f1f1f_0%,#1f1f1f_20%,#330d3b_30%,#330d3b_50%,#241426_64%,#1f1f1f_70%)] text-[#f0eef2]">
      <div className="flex w-[335px] shrink-0 items-center gap-1.5 pl-4">
        <svg width="21" height="20" viewBox="0 0 21 20">
          <path d="M8 0l13 2-4 13-10-3z" fill="#6ea83c" />
          <rect x="1" y="3" width="17" height="15" rx="2" fill="#1c86d4" /><circle cx="7" cy="10" r="3.500" fill="#fff" />
          <path d="M12 8h4M12 11h4M12 14h3" stroke="#bfe4ff" />
        </svg>
        <div className="text-[10px] leading-[13px]">
          <div>Νέα για εσάς</div>
          <div className="text-[#b9b5bc]">Καιρός: Ισχυροί...</div>
        </div>
      </div>
      <button aria-label="Start" className="grid size-5 shrink-0 grid-cols-2 gap-px [&>span]:bg-[#48bdf0]">
        <span /><span /><span /><span />
      </button>
      <label className="ml-2.5 flex h-[26px] w-[183px] shrink-0 items-center gap-2 rounded-full bg-[#54405a] pl-2.5">
        <Svg size={13} w={3}><circle cx="10" cy="10" r="7.500" /><path d="M16 16l7 7" /></Svg>
        <input aria-label="Search" placeholder="Search" className="w-28 text-[11px] outline-none placeholder:text-[#cfc6d3]" />
      </label>
      <div className="ml-0.5 flex w-[367px] shrink-0">
        {apps.map(([name, icon, running]) => (
          <button key={name} aria-label={name} className="relative flex h-[34px] flex-1 items-center justify-center">
            {icon}
            {running && <span className="absolute bottom-px h-0.5 w-1.5 rounded bg-[#a9a5ab]" />}
          </button>
        ))}
      </div>
      <button aria-label="FL Studio" className="relative ml-0.5 flex h-[34px] w-[34px] shrink-0 items-center justify-center rounded-sm bg-[#343434]">
        <svg width="20" height="20" viewBox="0 0 20 20">
          <circle cx="10" cy="10" r="9" fill="none" stroke="#5c5856" strokeWidth="1.2" />
          <path d="M6 8c1-3 7-3 7 1s-2 8-5 8-3-6-2-9z" fill="#f28a24" /><path d="M7 9c1-1 2-1 2 0l-1 5z" fill="#ffd070" />
          <path d="M7 6L5 2l4 2 3-3v3l4 1-4 3z" fill="#62b83a" />
        </svg>
        <span className="absolute bottom-px h-0.5 w-3.5 rounded bg-[#4cc2f4]" />
      </button>

      <div className="ml-auto flex shrink-0 items-center pr-4 text-[10px]">
        <Svg size={11} w={3}><path d="M3 16l9-9 9 9" /></Svg>
        <span className="ml-3.5 text-[#69b8cc]"><Svg size={15} w={1.8}><rect x="8" y="2" width="8" height="13" rx="4" /><path d="M4 11c0 10 16 10 16 0M12 19v4" /></Svg></span>
        <span className="ml-[15px]">ENG</span>
        <span className="ml-3"><Svg size={14}><path d="M1 9c6-7 16-7 22 0M5 13c4-5 10-5 14 0M8.500 17c2-3 5-3 7 0" /><circle cx="12" cy="20" r="1.5" fill="currentColor" /></Svg></span>
        <span className="ml-1.5"><Svg size={14} w={1.8}><path d="M1 9h4l6-5v16l-6-5H1zM14 9c2 2 2 4 0 6M17 6c4 3 4 9 0 12M20 3c5 5 5 13 0 18" /></Svg></span>
        <svg width="17" height="14" viewBox="0 0 17 14" className="ml-1.5">
          <rect x=".7" y="3.500" width="14" height="9" rx="2.500" fill="#8fe08c" stroke="#e8e8e8" strokeWidth="1.2" /><path d="M16 6v4" stroke="#e8e8e8" strokeWidth="1.5" />
          <path d="M8 0v7M5.500 5L8 8l2.500-3" stroke="#fff" fill="none" strokeWidth="1.5" />
        </svg>
        <span className="ml-0.5">100%</span>
        <div className="ml-3.5 text-right text-[10px] leading-[13px]">
          <div>12:06 PM</div>
          <div>4/2/2026</div>
        </div>
      </div>
    </footer>
  )
}

export default function App() {
  return (
    <div className="flex h-screen w-full flex-col overflow-hidden bg-[#1d0b2b] font-['Open_Sans','Noto_Sans',sans-serif]">
      <TopBar />
      <div className="flex min-h-0 grow">
        <Browser />
        <PianoRoll />
      </div>
      <Taskbar />
    </div>
  )
}
